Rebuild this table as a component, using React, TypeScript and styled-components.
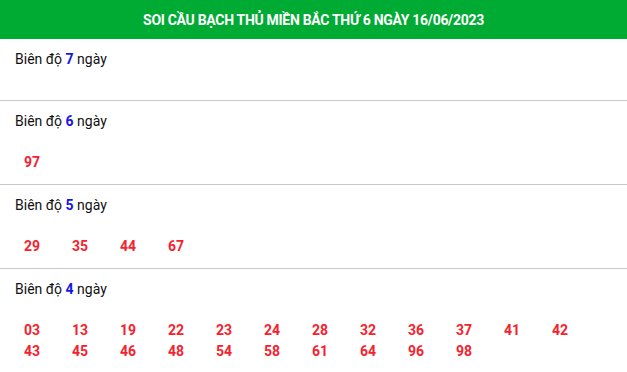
import React from "react";
import styled, { createGlobalStyle } from "styled-components";

const Global = createGlobalStyle`
  html, body { margin: 0; padding: 0; background: #fff; }
  body { font-family: Roboto, "Noto Sans", Arial, sans-serif; }
`;

const Wrap = styled.div`
  width: 627px;
  background: #fff;
`;

const Header = styled.div`
  height: 39px;
  background: #00ab34;
  color: #fff;
  display: flex;
  align-items: center;
  justify-content: center;
  font-weight: 700;
  font-size: 14px;
  letter-spacing: -0.3px;
  text-transform: uppercase;
`;

const Row = styled.div<{ $last?: boolean }>`
  padding: 10px 0 11px 15px;
  border-bottom: ${(p) => (p.$last ? "none" : "1px solid #c8c8c8")};
`;

const Label = styled.div`
  font-size: 14px;
  line-height: 20px;
  color: #111;
`;

const Days = styled.b`
  color: #1414e6;
`;

const Numbers = styled.div`
  margin-top: 21px;
  padding-left: 9px;
  display: grid;
  grid-template-columns: repeat(12, 48px);
  grid-auto-rows: 21px;

  &:empty {
    margin-top: 20px;
  }
`;

const Num = styled.span`
  font-size: 14px;
  font-weight: 700;
  line-height: 21px;
  color: #f5222d;
`;

const data: { d: number; nums: string[] }[] = [
  { d: 7, nums: [] },
  { d: 6, nums: ["97"] },
  { d: 5, nums: ["29", "35", "44", "67"] },
  {
    d: 4,
    nums: [
      "03", "13", "19", "22", "23", "24", "28", "32", "36", "37", "41", "42",
      "43", "45", "46", "48", "54", "58", "61", "64", "96", "98",
    ],
  },
];

export default function App() {
  return (
    <Wrap>
      <Global />
      <Header>SOI CẦU BẠCH THỦ MIỀN BẮC THỨ 6 NGÀY 16/06/2023</Header>
      {data.map((r, i) => (
        <Row key={r.d} $last={i === data.length - 1}>
          <Label>
            Biên độ <Days>{r.d}</Days> ngày
          </Label>
          <Numbers>
            {r.nums.map((n) => (
              <Num key={n}>{n}</Num>
            ))}
          </Numbers>
        </Row>
      ))}
    </Wrap>
  );
}
